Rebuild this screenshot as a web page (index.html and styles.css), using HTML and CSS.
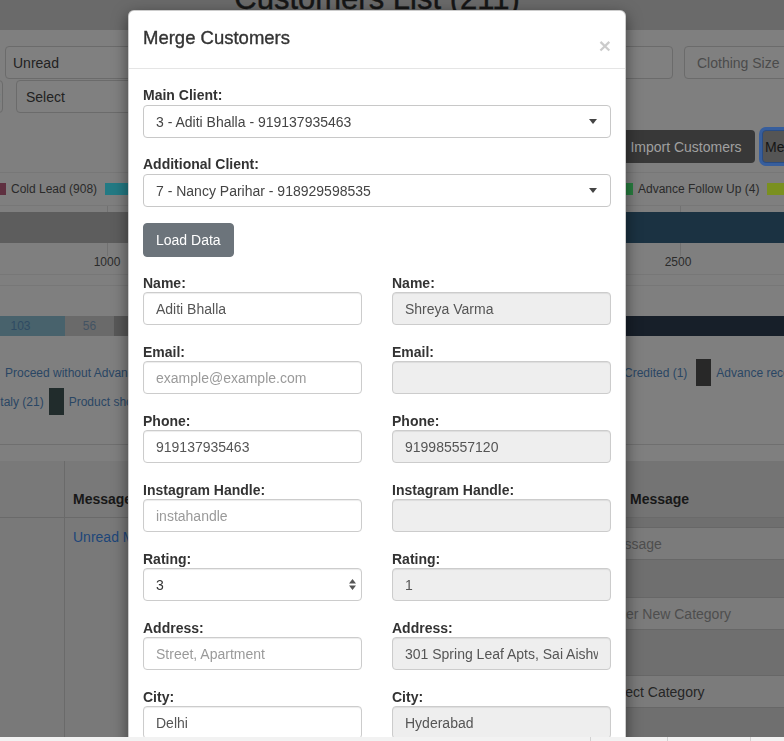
FILE: index.html
```html
<!DOCTYPE html>
<html lang="en">
<head>
<meta charset="utf-8">
<title>Customers List</title>
<link rel="stylesheet" href="styles.css">
</head>
<body>
<div class="page">
  <header class="page-head"><h1 class="page-title">Customers List (211)</h1></header>

  <div class="filters">
    <div class="filter-row row1">
      <div class="fld fld-unread">Unread</div>
      <div class="fld fld-mid"></div>
      <div class="fld fld-size">Clothing Size</div>
    </div>
    <div class="filter-row row2">
      <div class="fld fld-colon">:</div>
      <div class="fld fld-select">Select</div>
    </div>
  </div>

  <div class="toolbar">
    <button class="pbtn pbtn-dark">Import Customers</button>
    <button class="pbtn pbtn-focus">Merge</button>
  </div>

  <div class="legend-a">
    <div class="lg-group lg-left">
      <span class="lg-item"><i class="sw sw-maroon"></i>Cold Lead (908)</span>
      <span class="lg-item"><i class="sw sw-teal"></i></span>
    </div>
    <div class="lg-group">
      <span class="lg-item"><i class="sw sw-green"></i>Advance Follow Up (4)</span>
      <span class="lg-item"><i class="sw sw-lime"></i>Order Placed (2)</span>
    </div>
  </div>

  <svg class="chart" width="784" height="130" viewBox="0 0 784 130">
    <line x1="107.5" y1="0" x2="107.5" y2="50" stroke="#717171"/>
    <line x1="680.5" y1="0" x2="680.5" y2="50" stroke="#717171"/>
    <rect x="0" y="6" width="400" height="31" fill="#5d5d5d"/>
    <rect x="400" y="6" width="384" height="31" fill="#1b3242"/>
    <text x="107" y="60" class="tick">1000</text>
    <text x="678" y="60" class="tick">2500</text>
    <line x1="0" y1="68.5" x2="784" y2="68.5" stroke="#777"/>
    <line x1="0" y1="79.5" x2="784" y2="79.5" stroke="#777"/>
    <rect x="0" y="110" width="65" height="20" fill="#48626c"/>
    <rect x="65" y="110" width="49" height="20" fill="#6a6a6a"/>
    <rect x="114" y="110" width="200" height="20" fill="#585858"/>
    <rect x="314" y="110" width="470" height="20" fill="#171f29"/>
    <text x="20.5" y="124" class="seg">103</text>
    <text x="89.5" y="124" class="seg seg2">56</text>
  </svg>

  <div class="legend-b">
    <div class="lb-row">
      <div class="lb-cell lb-first"><span>Proceed without Advance Payment (6)</span></div>
      <div class="lb-cell"><span>Credited (1)</span><i class="sq"></i><span>Advance received (3)</span></div>
    </div>
    <div class="lb-row">
      <div class="lb-cell lb-second"><span>Italy (21)</span><i class="sq sq-dark"></i><span>Product shown (14)</span></div>
      <div class="lb-cell"></div>
    </div>
  </div>

  <div class="ctable">
    <div class="th th-first"></div>
    <div class="th">Message</div>
    <div class="th"></div>
    <div class="th">Message</div>
    <div class="td td-first"></div>
    <div class="td"><a class="link">Unread Message</a></div>
    <div class="td td-form">
      <div class="cfld ph fld-a">Message</div>
      <div class="cfld ph fld-b">Enter New Category</div>
      <div class="cfld fld-c">Select Category</div>
    </div>
  </div>
</div>

<div class="modal">
  <div class="modal-dialog">
    <div class="modal-content">
      <div class="modal-header">
        <h4 class="modal-title">Merge Customers</h4>
        <button class="close" type="button">&times;</button>
      </div>
      <div class="modal-body">
        <div class="group-top">
          <label class="lbl">Main Client:</label>
          <div class="select">3 - Aditi Bhalla - 919137935463<span class="caret"></span></div>
        </div>
        <div class="group-top">
          <label class="lbl">Additional Client:</label>
          <div class="select">7 - Nancy Parihar - 918929598535<span class="caret"></span></div>
        </div>
        <button class="btn-load" type="button">Load Data</button>

        <div class="merge-grid">
          <div class="fg"><label class="lbl2">Name:</label><input class="form-control" type="text" value="Aditi Bhalla"></div>
          <div class="fg"><label class="lbl2">Name:</label><input class="form-control" type="text" value="Shreya Varma" disabled></div>

          <div class="fg"><label class="lbl2">Email:</label><input class="form-control" type="text" placeholder="example@example.com"></div>
          <div class="fg"><label class="lbl2">Email:</label><input class="form-control" type="text" disabled></div>

          <div class="fg"><label class="lbl2">Phone:</label><input class="form-control" type="text" value="919137935463"></div>
          <div class="fg"><label class="lbl2">Phone:</label><input class="form-control" type="text" value="919985557120" disabled></div>

          <div class="fg"><label class="lbl2">Instagram Handle:</label><input class="form-control" type="text" placeholder="instahandle"></div>
          <div class="fg"><label class="lbl2">Instagram Handle:</label><input class="form-control" type="text" disabled></div>

          <div class="fg"><label class="lbl2">Rating:</label>
            <div class="form-control num"><span>3</span>
              <svg class="spin" width="7" height="11" viewBox="0 0 7 11"><path d="M0 4.5 L3.5 0 L7 4.5 Z M0 6.5 L7 6.5 L3.5 11 Z" fill="#555"/></svg>
            </div>
          </div>
          <div class="fg"><label class="lbl2">Rating:</label><input class="form-control" type="text" value="1" disabled></div>

          <div class="fg"><label class="lbl2">Address:</label><input class="form-control" type="text" placeholder="Street, Apartment"></div>
          <div class="fg"><label class="lbl2">Address:</label><input class="form-control" type="text" value="301 Spring Leaf Apts, Sai Aishwarya Layout" disabled></div>

          <div class="fg"><label class="lbl2">City:</label><input class="form-control" type="text" value="Delhi"></div>
          <div class="fg"><label class="lbl2">City:</label><input class="form-control" type="text" value="Hyderabad" disabled></div>

          <div class="fg"><label class="lbl2">State:</label><input class="form-control" type="text" value="Delhi"></div>
          <div class="fg"><label class="lbl2">State:</label><input class="form-control" type="text" value="Telangana" disabled></div>
        </div>
      </div>
    </div>
  </div>
</div>

<div class="statusbar">
  <div class="sb-cell"></div>
  <div class="sb-cell"></div>
  <div class="sb-cell"></div>
  <div class="sb-cell"></div>
</div>
</body>
</html>
```

FILE: styles.css
```css
* { box-sizing: border-box; }

html, body { margin: 0; }

body {
  width: 784px;
  height: 741px;
  overflow: hidden;
  position: relative;
  background: #7f7f7f;
  font-family: "Liberation Sans", Arial, sans-serif;
  font-size: 14px;
  color: #1c1c1c;
}

.page { width: 784px; white-space: nowrap; }

/* ---------- page header ---------- */
.page-head {
  height: 30px;
  background: #6a6a6a;
  text-align: center;
  overflow: hidden;
  padding-right: 30px;
}
.page-title {
  margin: -17px 0 0;
  font-size: 31px;
  line-height: 31px;
  font-weight: normal;
  color: #161616;
  -webkit-text-stroke: 0.4px #161616;
}

/* ---------- filters ---------- */
.filters { padding-top: 16px; }
.filter-row { display: flex; gap: 11px; height: 33px; }
.row1 { padding-left: 5px; }
.row2 { margin-top: 1px; gap: 13px; }

.fld {
  flex: none;
  height: 33px;
  border: 1px solid #6b6b6b;
  border-radius: 4px;
  background: #808080;
  display: flex;
  align-items: center;
  color: #222;
}
.fld-unread { width: 236px; padding-left: 7px; }
.fld-mid { width: 421px; }
.fld-size { width: 150px; padding-left: 12px; color: #4b4b4b; }
.fld-colon { width: 33px; margin-left: -30px; justify-content: flex-end; padding-right: 1px; }
.fld-select { width: 300px; padding-left: 9px; }

/* ---------- toolbar ---------- */
.toolbar {
  display: flex;
  justify-content: flex-end;
  gap: 7px;
  margin: 17px -50px 0 0;
  height: 33px;
}
.pbtn {
  height: 33px;
  border-radius: 4px;
  font: 14px "Liberation Sans", Arial, sans-serif;
  white-space: nowrap;
}
.pbtn-dark {
  background: #383838;
  color: #a0a0a0;
  border: 0;
  padding: 0 13px 0 12px;
  width: 137px;
}
.pbtn-focus {
  width: 72px;
  background: #555;
  color: #161616;
  border: 1px solid #294c83;
  box-shadow: 0 0 0 3px #375e9d;
  padding: 0 0 0 2px;
  text-align: left;
}

/* ---------- legend A ---------- */
.legend-a {
  margin-top: 9px;
  height: 34px;
  border-top: 1px solid #777;
  border-bottom: 1px solid #777;
  display: grid;
  grid-template-columns: 610px 1fr;
  align-items: center;
  font-size: 12px;
  color: #2a2a2a;
}
.lg-group { display: flex; align-items: center; }
.lg-left { margin-left: -17px; }
.lg-item { display: flex; align-items: center; margin-right: 8px; }
.sw { display: inline-block; width: 23px; height: 12px; margin-right: 5px; }
.sw-maroon { background: #5f3040; }
.sw-teal { background: #237a84; }
.sw-green { background: #287f40; }
.sw-lime { background: #7a9020; }

/* ---------- chart ---------- */
.chart { display: block; }
.tick { font: 12px "Liberation Sans", Arial, sans-serif; fill: #2b2b2b; text-anchor: middle; }
.seg { font: 12px "Liberation Sans", Arial, sans-serif; fill: #2f4b63; text-anchor: middle; }
.seg2 { fill: #435363; }

/* ---------- legend B ---------- */
.legend-b {
  margin-top: 22px;
  padding-bottom: 28px;
  border-bottom: 1px solid #6f6f6f;
  font-size: 12px;
  color: #2a4664;
}
.lb-row {
  display: grid;
  grid-template-columns: 624px 1fr;
  height: 29px;
  align-items: center;
}
.lb-cell { display: flex; align-items: center; white-space: nowrap; }
.lb-first { padding-left: 5px; }
.lb-second { margin-left: -3px; }
.sq { display: inline-block; width: 15px; height: 27px; background: #282828; margin: 0 5px 0 9px; }
.sq-dark { background: #212c2c; margin-left: 5px; }

/* ---------- table ---------- */
.ctable {
  margin: 16px -100px 0 0;
  display: grid;
  grid-template-columns: 65px 519px 38px 1fr;
  grid-template-rows: 57px 230px;
  background: #797979;
}
.th {
  border-bottom: 1px solid #6a6a6a;
  display: flex;
  align-items: flex-end;
  padding: 0 8px 8px;
  font-weight: bold;
  line-height: 20px;
  color: #181818;
}
.th:nth-child(3), .th:nth-child(4) { background: #747474; }
.th-first, .td-first { border-right: 1px solid #6a6a6a; }
.td { padding: 9px 8px 0; line-height: 20px; }
.link { color: #1d4679; }
.td-form {
  grid-column: 3 / 5;
  background: #6f6f6f;
  padding: 9px 0 0 8px;
}
.cfld {
  height: 33px;
  background: #7b7b7b;
  border: 1px solid #676767;
  border-radius: 4px;
  display: flex;
  align-items: center;
  padding-left: 12px;
  color: #262626;
}
.cfld.ph { color: #4e4e4e; }
.fld-a { margin-bottom: 37px; }
.fld-b { margin-bottom: 45px; }

/* ---------- modal ---------- */
.modal {
  position: fixed;
  inset: 0;
  z-index: 5;
  overflow: hidden;
}
.modal-dialog {
  width: 498px;
  margin: 10px 0 0 128px;
}
.modal-content {
  background: #fff;
  border: 1px solid rgba(0, 0, 0, 0.2);
  border-radius: 6px;
  box-shadow: 0 5px 15px rgba(0, 0, 0, 0.5);
}
.modal-header {
  display: flex;
  justify-content: space-between;
  align-items: flex-start;
  padding: 14px 14px 17px;
  border-bottom: 1px solid #e5e5e5;
}
.modal-title {
  margin: 0;
  font-size: 18.5px;
  line-height: 26px;
  font-weight: normal;
  color: #333;
  -webkit-text-stroke: 0.35px #333;
}
.close {
  margin: 10px 0 -5px;
  padding: 0;
  border: 0;
  background: none;
  font: bold 21px/21px "Liberation Sans", Arial, sans-serif;
  color: #000;
  opacity: 0.2;
}
.modal-body { padding: 16px 14px 20px; }

.lbl {
  display: block;
  font-weight: bold;
  line-height: 20px;
  color: #333;
}
.group-top { margin-bottom: 16px; }

.select {
  height: 33px;
  border: 1px solid #c8c8c8;
  border-radius: 4px;
  display: flex;
  align-items: center;
  padding: 0 13px 0 12px;
  color: #444;
}
.caret {
  margin-left: auto;
  width: 0;
  height: 0;
  border-style: solid;
  border-width: 5px 4px 0;
  border-color: #444 transparent transparent;
}

.btn-load {
  display: block;
  height: 34px;
  padding: 0 12px;
  background: #6c747b;
  color: #fff;
  border: 1px solid #6c747b;
  border-radius: 4px;
  font: 14px "Liberation Sans", Arial, sans-serif;
  margin-bottom: 17px;
}

.merge-grid {
  display: grid;
  grid-template-columns: 1fr 1fr;
  column-gap: 30px;
}
.fg { margin-bottom: 18px; }
.lbl2 {
  display: block;
  font-weight: bold;
  line-height: 18px;
  color: #333;
}
.form-control {
  display: block;
  width: 100%;
  height: 33px;
  padding: 0 12px;
  font: 14px "Liberation Sans", Arial, sans-serif;
  color: #555;
  background: #fff;
  border: 1px solid #ccc;
  border-radius: 4px;
  box-shadow: inset 0 1px 1px rgba(0, 0, 0, 0.075);
  outline: none;
}
.form-control::placeholder { color: #9a9a9a; }
.form-control:disabled {
  background: #eee;
  color: #555;
  -webkit-text-fill-color: #555;
  opacity: 1;
}
.num {
  display: flex;
  align-items: center;
  justify-content: space-between;
  padding-right: 5px;
  color: #333;
}

/* ---------- bottom strip ---------- */
.statusbar {
  position: fixed;
  left: 0;
  right: 0;
  bottom: 0;
  height: 4px;
  z-index: 10;
  background: #f2f2f2;
  display: grid;
  grid-template-columns: 590px 77px 83px 1fr;
}
.sb-cell + .sb-cell { border-left: 1px solid #d2d2d2; }
```
